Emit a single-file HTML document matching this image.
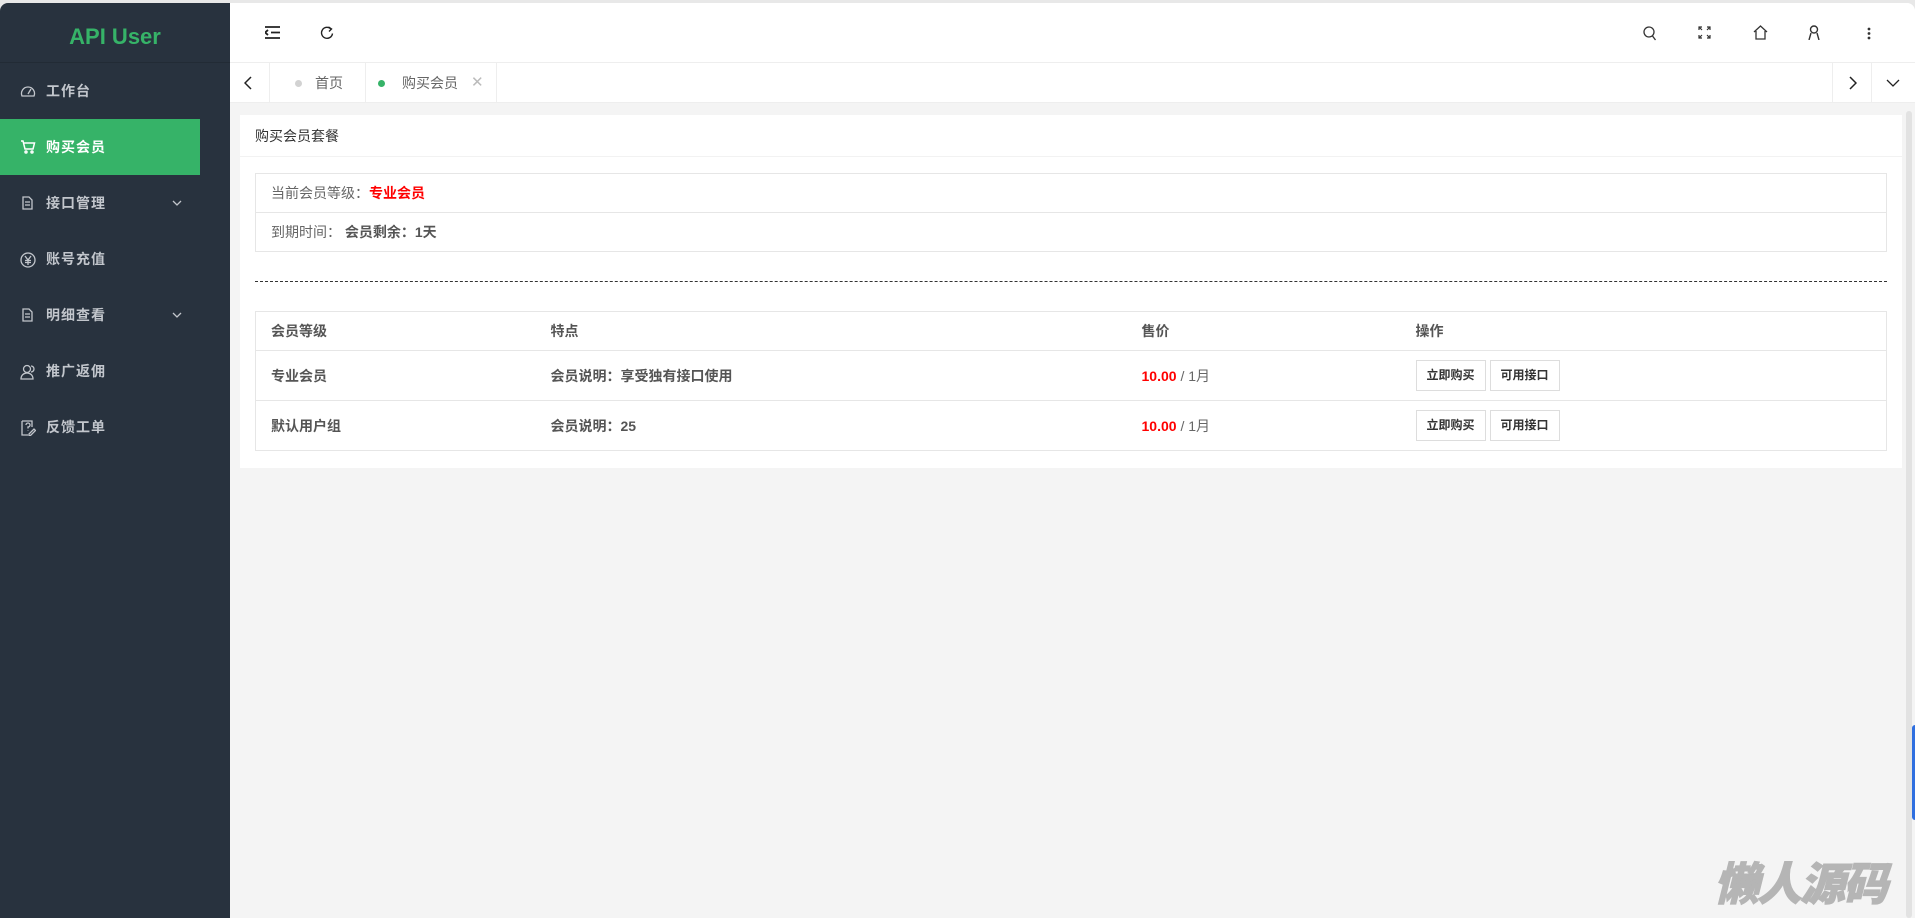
<!DOCTYPE html>
<html><head><meta charset="utf-8"><style>
*{margin:0;padding:0;box-sizing:border-box}
body{width:1915px;height:918px;overflow:hidden;background:#e8e8e8;font-family:"Liberation Sans","Noto Sans CJK SC",sans-serif;position:relative}
.side{position:absolute;left:0;top:3px;width:230px;height:915px;background:#28323e;border-top-left-radius:8px}
.logo{height:60px;border-bottom:1px solid #222b35;color:#36b368;font-weight:bold;font-size:22px;text-align:center;line-height:68px}
.mi{position:absolute;left:0;width:200px;height:56px;color:#c2c6cc;font-size:14px;font-weight:bold;line-height:56px;padding-left:46px;letter-spacing:1px}
.mi.act{background:#36b368;color:#fff}
.mi svg{position:absolute;left:20px;top:21px}
.mi .ch{position:absolute;left:172px;top:25px}
.main{position:absolute;left:230px;top:3px;width:1685px;height:915px;background:#f4f4f4;border-top-right-radius:8px;overflow:hidden}
.top{position:absolute;left:0;top:0;width:1685px;height:60px;background:#fff;border-bottom:1px solid #eee}
.tabs{position:absolute;left:0;top:60px;width:1685px;height:40px;background:#fff;border-bottom:1px solid #eee}
.tb{position:absolute;top:0;height:40px;border-right:1px solid #eee;font-size:13px;color:#666;line-height:40px}
.card{position:absolute;left:10px;top:112px;width:1662px;height:353px;background:#fff}
.ch1{height:42px;border-bottom:1px solid #f2f2f2;font-size:14px;color:#333;line-height:42px;padding-left:15px}
table{border-collapse:collapse;position:absolute;font-size:14px;color:#666}
td{border:1px solid #e6e6e6;padding-left:15px}
.t2 td{border-left:none;border-right:none}
.t2 tr td:first-child{border-left:1px solid #e6e6e6}
.t2 tr td:last-child{border-right:1px solid #e6e6e6}
.b{font-weight:bold;color:#555}
.btn{display:inline-block;height:31px;width:70px;border:1px solid #ddd;text-align:center;line-height:29px;font-size:12px;color:#333;font-weight:bold;margin-right:4px;background:#fff}
.red{color:#f00;font-weight:bold}
</style></head><body>
<div class="side">
<div class="logo">API User</div>
<div class="mi" style="top:60px"><svg width="16" height="14" viewBox="0 0 16 14" fill="none" stroke="#c2c6cc" stroke-width="1.3"><path d="M2 12A6.5 6.5 0 1 1 14 12Z"/><path d="M8 10L11 5"/></svg>工作台</div>
<div class="mi act" style="top:116px"><svg width="16" height="14" viewBox="0 0 16 14" fill="none" stroke="#fff" stroke-width="1.5"><path d="M1 1h2l2 8h8l1.5-6H4"/><circle cx="6" cy="12" r="1"/><circle cx="12" cy="12" r="1"/></svg>购买会员</div>
<div class="mi" style="top:172px"><svg width="14" height="14" viewBox="0 0 14 14" fill="none" stroke="#c2c6cc" stroke-width="1.3"><path d="M3 1h6l3 3v9H3Z M5 6h5M5 9h5"/></svg>接口管理<svg class="ch" width="10" height="6" viewBox="0 0 10 6" fill="none" stroke="#c2c6cc" stroke-width="1.3"><path d="M1 1l4 4 4-4"/></svg></div>
<div class="mi" style="top:228px"><svg width="16" height="16" viewBox="0 0 16 16" fill="none" stroke="#c2c6cc" stroke-width="1.3"><circle cx="8" cy="8" r="7"/><path d="M5 4l3 4 3-4M8 8v5M5 8.5h6M5 10.5h6"/></svg>账号充值</div>
<div class="mi" style="top:284px"><svg width="14" height="14" viewBox="0 0 14 14" fill="none" stroke="#c2c6cc" stroke-width="1.3"><path d="M3 1h6l3 3v9H3Z M5 6h5M5 9h5"/></svg>明细查看<svg class="ch" width="10" height="6" viewBox="0 0 10 6" fill="none" stroke="#c2c6cc" stroke-width="1.3"><path d="M1 1l4 4 4-4"/></svg></div>
<div class="mi" style="top:340px"><svg width="16" height="16" viewBox="0 0 16 16" fill="none" stroke="#c2c6cc" stroke-width="1.3"><circle cx="7" cy="5" r="3.5"/><path d="M1 15c0-4 3-6 6-6s6 2 6 6Z M11 2a3 3 0 0 1 0 6"/></svg>推广返佣</div>
<div class="mi" style="top:396px"><svg width="16" height="16" viewBox="0 0 16 16" fill="none" stroke="#c2c6cc" stroke-width="1.3"><path d="M2 1h10v6M2 1v14h6"/><path d="M6 5a2 2 0 1 1 2 2v1.5M8 10.5v.5M9 14l5-5 1.5 1.5-5 5H9Z"/></svg>反馈工单</div>
</div>
<div class="main">
<div class="top">
<svg style="position:absolute;left:35px;top:23px" width="15" height="13" viewBox="0 0 15 13" stroke="#222" stroke-width="1.8" fill="none"><path d="M0 1h15M6 6.5h9M0 12h15M3 4L0 6.5 3 9"/></svg>
<svg style="position:absolute;left:90px;top:23px" width="14" height="14" viewBox="0 0 14 14" stroke="#222" stroke-width="1.4" fill="none"><path d="M11 3A5.5 5.5 0 1 0 12.5 7.5"/><path d="M8.5 1L11.5 3 9 5.5"/></svg>
<svg style="position:absolute;left:1413px;top:23px" width="14" height="15" viewBox="0 0 14 15" stroke="#333" stroke-width="1.3" fill="none"><circle cx="6" cy="6" r="5"/><path d="M9.5 10l3 4"/></svg>
<svg style="position:absolute;left:1468px;top:23px" width="13" height="13" viewBox="0 0 13 13" stroke="#333" stroke-width="1.2" fill="none"><path d="M1 4V1h3M9 1h3v3M12 9v3H9M4 12H1V9M1 1l3 3M12 1L9 4M12 12L9 9M1 12l3-3"/></svg>
<svg style="position:absolute;left:1523px;top:22px" width="15" height="15" viewBox="0 0 15 15" stroke="#333" stroke-width="1.3" fill="none"><path d="M1 7L7.5 1 14 7M3 6v8h9V6"/></svg>
<svg style="position:absolute;left:1578px;top:22px" width="12" height="15" viewBox="0 0 12 15" stroke="#333" stroke-width="1.4" fill="none"><circle cx="6" cy="4.5" r="3.5"/><path d="M1 15l2-7M11 15L9 8"/></svg>
<svg style="position:absolute;left:1637px;top:24px" width="4" height="13" viewBox="0 0 4 13" fill="#333"><circle cx="2" cy="2" r="1.4"/><circle cx="2" cy="6.5" r="1.4"/><circle cx="2" cy="11" r="1.4"/></svg>
</div>
<div class="tabs">
<div class="tb" style="left:0;width:40px"><svg style="position:absolute;left:14px;top:13px" width="8" height="14" viewBox="0 0 8 14" stroke="#222" stroke-width="1.5" fill="none"><path d="M7 1L1 7l6 6"/></svg></div>
<div class="tb" style="left:40px;width:96px;padding-left:45px;font-size:14px"><span style="position:absolute;left:25px;top:17px;width:7px;height:7px;border-radius:50%;background:#d2d2d2"></span>首页</div>
<div class="tb" style="left:136px;width:131px;padding-left:36px;font-size:14px"><span style="position:absolute;left:12px;top:17px;width:7px;height:7px;border-radius:50%;background:#36b368"></span>购买会员<span style="position:absolute;left:105px;color:#bbb;font-size:15px">✕</span></div>
<div class="tb" style="left:1602px;width:40px;border-left:1px solid #eee"><svg style="position:absolute;left:16px;top:13px" width="8" height="14" viewBox="0 0 8 14" stroke="#222" stroke-width="1.5" fill="none"><path d="M1 1l6 6-6 6"/></svg></div>
<div class="tb" style="left:1642px;width:43px;border:none"><svg style="position:absolute;left:14px;top:16px" width="14" height="8" viewBox="0 0 14 8" stroke="#222" stroke-width="1.3" fill="none"><path d="M1 1l6 6 6-6"/></svg></div>
</div>
<div style="position:absolute;left:1676px;top:108px;width:6px;height:807px;background:#e2e2e2;border-radius:3px"></div>
<div class="card">
<div class="ch1">购买会员套餐</div>
<table style="left:15px;top:58px;width:1632px">
<tr style="height:39px"><td>当前会员等级：<span class="red">专业会员</span></td></tr>
<tr style="height:39px"><td>到期时间： <span class="b">会员剩余：1天</span></td></tr>
</table>
<div style="position:absolute;left:15px;top:166px;width:1632px;border-top:1px dashed #333"></div>
<table class="t2" style="left:15px;top:196px;width:1632px">
<tr style="height:39px"><td style="width:280px" class="b">会员等级</td><td style="width:591px" class="b">特点</td><td style="width:274px" class="b">售价</td><td class="b">操作</td></tr>
<tr style="height:50px"><td class="b">专业会员</td><td class="b">会员说明：享受独有接口使用</td><td><span class="red">10.00</span> <span style="font-weight:normal;color:#666">/ 1月</span></td><td><span class="btn">立即购买</span><span class="btn">可用接口</span></td></tr>
<tr style="height:50px"><td class="b">默认用户组</td><td class="b">会员说明：25</td><td><span class="red">10.00</span> <span style="font-weight:normal;color:#666">/ 1月</span></td><td><span class="btn">立即购买</span><span class="btn">可用接口</span></td></tr>
</table>
</div>
<div style="position:absolute;left:1484px;top:852px;font-size:45px;font-weight:900;font-style:italic;color:#b5b5b5;letter-spacing:-2px;-webkit-text-stroke:1px #b5b5b5;font-family:'Noto Sans CJK SC',sans-serif;line-height:52px">懒人源码</div>
</div>
<div style="position:absolute;left:1912px;top:725px;width:3px;height:95px;background:#2f6fe0;border-radius:3px 0 0 3px"></div>
</body></html>
